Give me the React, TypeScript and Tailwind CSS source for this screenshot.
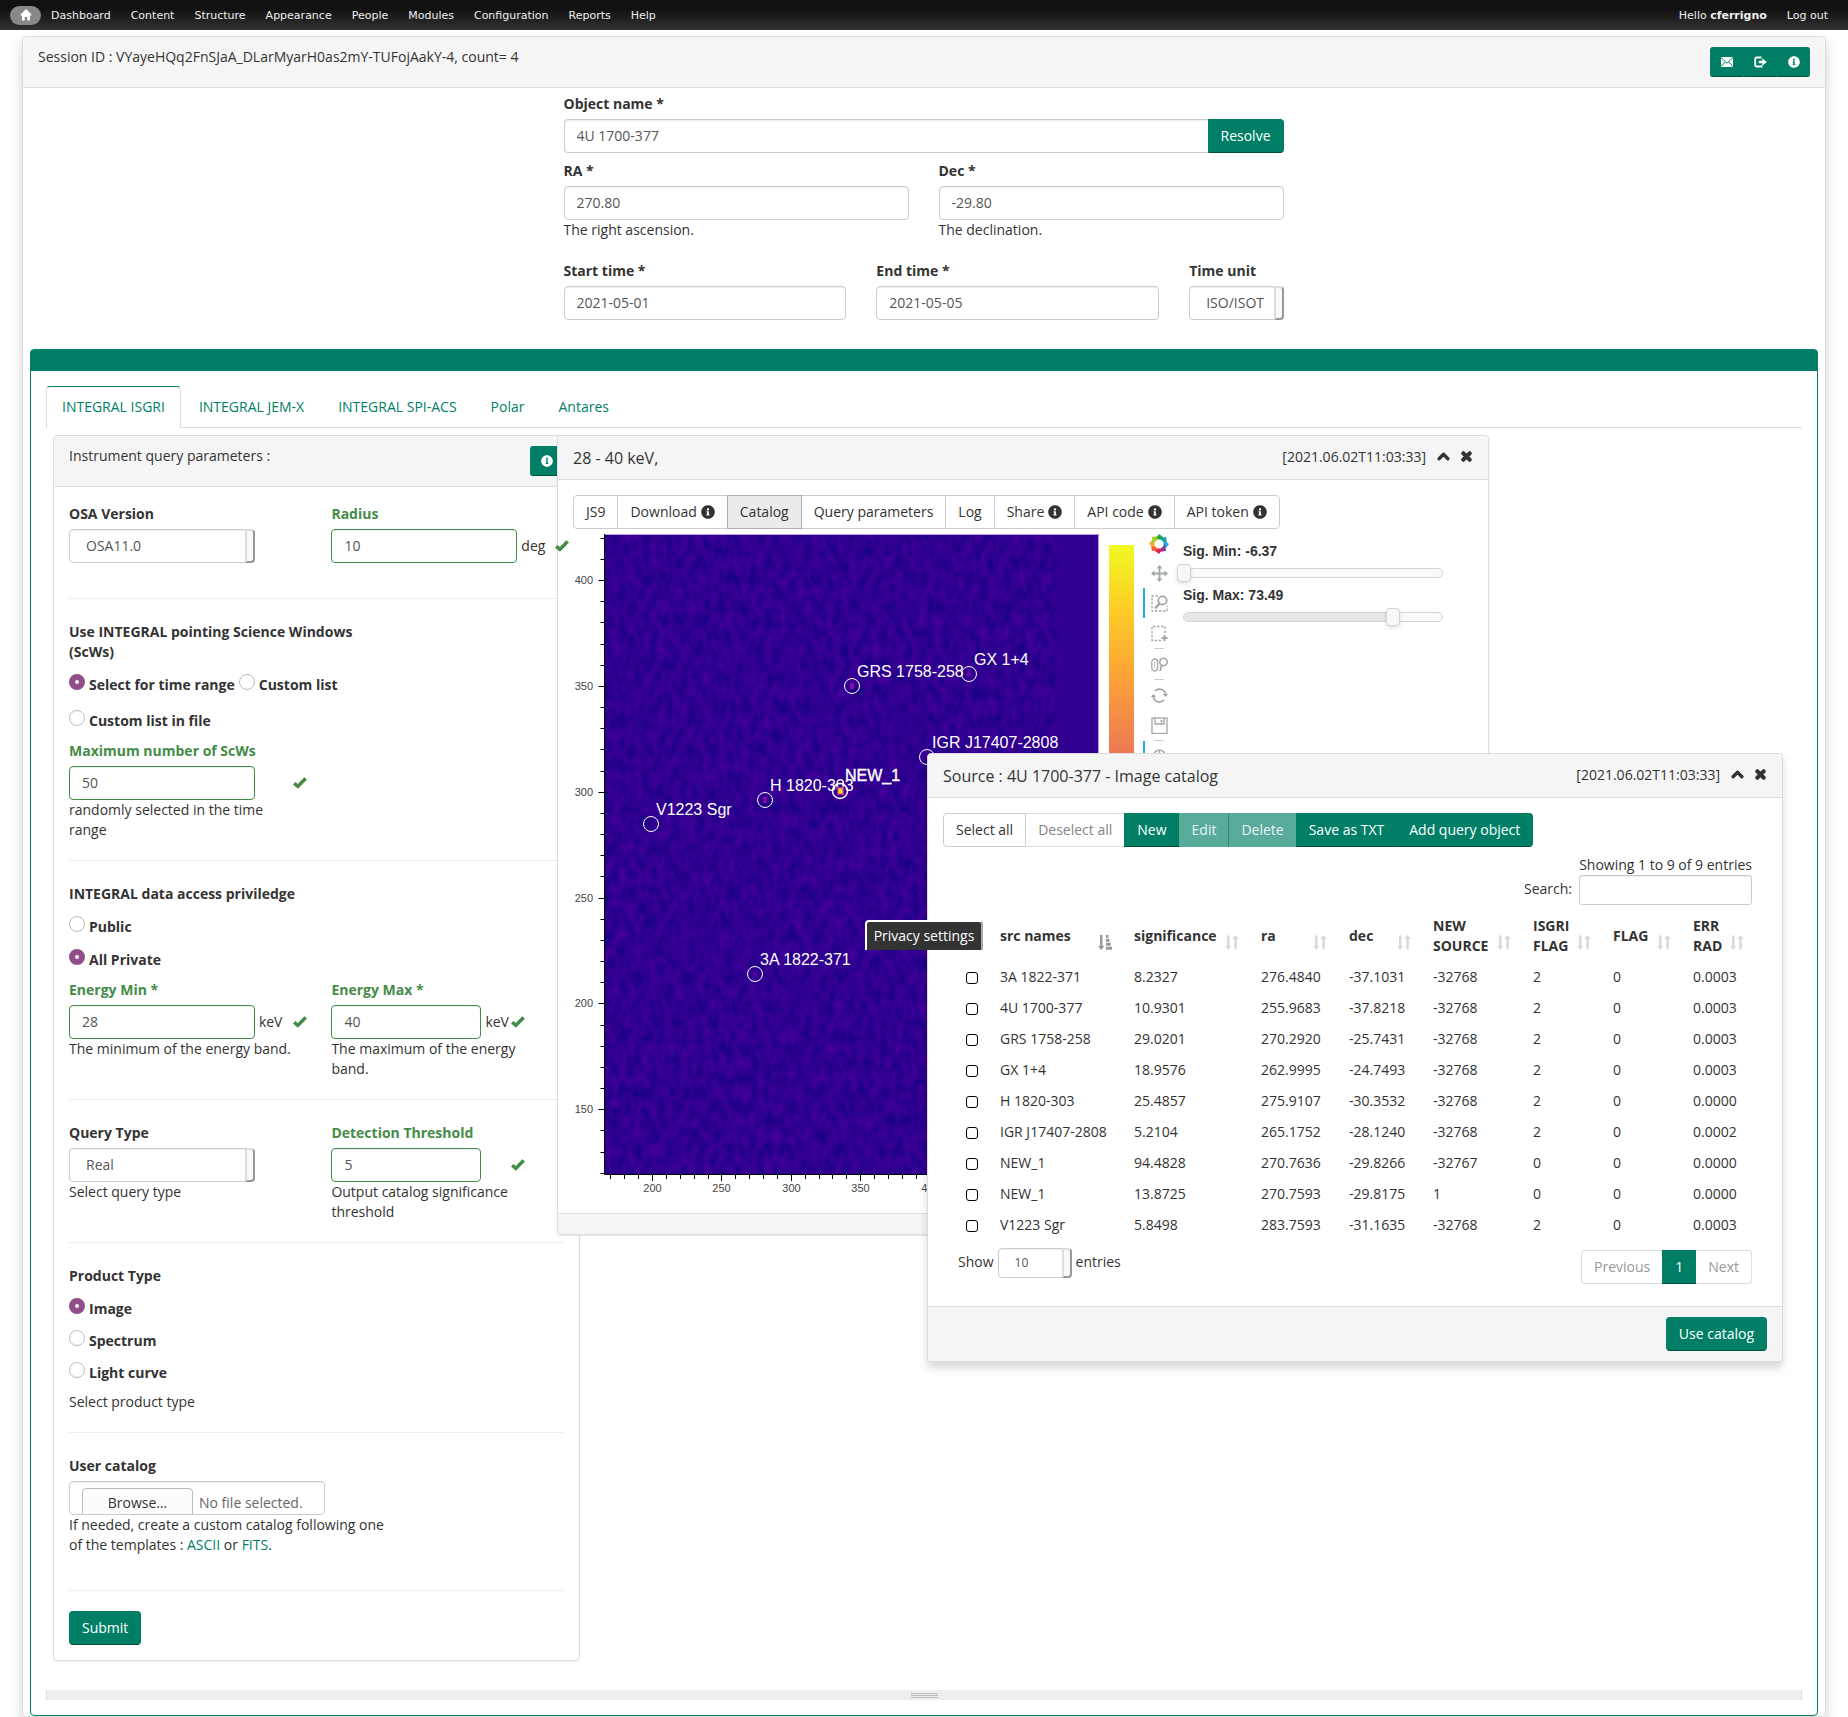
import React from "react";
import { FaChevronUp, FaInfoCircle, FaTimes } from "react-icons/fa";

const inputBase =
  "h-[34px] w-full rounded border bg-white px-3 pb-[2px] text-sm text-[#555] shadow-[inset_0_1px_1px_rgba(0,0,0,0.075)] outline-none";
const greenButton =
  "border border-[#007f66] border-b-[#00523f] bg-[#007f66] text-sm text-white";

function Check({ className }: { className: string }) {
  return (
    <svg aria-hidden viewBox="0 0 14 12" fill="#458b48" className={`absolute top-[36px] z-20 h-3 w-[14px] ${className}`}>
      <path d="M0 7.400 2.300 4.900 4.800 7 11.300 0.200 14 2.600 5 11.800Z" />
    </svg>
  );
}

function Field({
  id,
  label,
  value,
  valid,
  width = "w-full",
  unit,
  help,
  check,
}: {
  id: string;
  label: string;
  value: string;
  valid?: boolean;
  width?: string;
  unit?: string;
  help?: string;
  check?: string;
}) {
  return (
    <div className="relative">
      <label htmlFor={id} className={`block font-bold ${valid ? "text-[#458b48]" : ""}`}>
        {label}
      </label>
      <div className="mt-[5px] flex items-center gap-1">
        <div className={width}>
          <input
            id={id}
            defaultValue={value}
            className={`${inputBase} ${valid ? "border-[#458b48]" : "border-[#ccc]"}`}
          />
        </div>
        {unit && <span>{unit}</span>}
      </div>
      {check && <Check className={check} />}
      {help && <p>{help}</p>}
    </div>
  );
}

function SelectBox({ id, value, className = "h-[34px] text-sm" }: { id: string; value: string; className?: string }) {
  return (
    <div className="relative">
      <select
        id={id}
        className={`w-full appearance-none rounded border border-[#ccc] bg-white pl-4 text-[#555] shadow-[inset_0_1px_1px_rgba(0,0,0,0.075)] outline-none ${className}`}
      >
        <option>{value}</option>
      </select>
      <span
        aria-hidden
        className="pointer-events-none absolute inset-y-0 right-0 w-[10px] rounded-r border-2 border-t-[#ddd] border-r-[#999] border-b-[#999] border-l-[#ddd] bg-[#f8f8f8]"
      />
    </div>
  );
}

function Radio({ name, label, checked }: { name: string; label: string; checked?: boolean }) {
  return (
    <label className="flex h-5 items-start gap-1 font-bold">
      <input
        type="radio"
        name={name}
        defaultChecked={checked}
        className="-mt-px size-4 appearance-none rounded-full border border-[#bbb] bg-white checked:border-[6px] checked:border-[#924d8b]"
      />
      {label}
    </label>
  );
}

function Rule({ className = "" }: { className?: string }) {
  return <hr className={`border-t border-[#eee] ${className}`} />;
}

/* ---------- icons ---------- */

function HomeIcon() {
  return (
    <svg viewBox="0 0 12 12" className="size-3" fill="#fff">
      <path d="M6 0 0.5 5.5V6.5H2V11.500H4.700V8H7.300V11.500H10V6.500H11.500V5.500Z" />
    </svg>
  );
}

function EnvelopeIcon() {
  return (
    <svg viewBox="0 0 12 12" className="size-3">
      <rect y="1" width="12" height="10" fill="#fff" />
      <path d="M0 1.500 6 7.200 12 1.500M0 10.500 4.200 6M12 10.500 7.800 6" fill="none" stroke="#007f66" strokeWidth="1" />
    </svg>
  );
}

function LogoutIcon() {
  return (
    <svg viewBox="0 0 13 12" className="h-3 w-[13px]">
      <path d="M7.500 1.500H2.500A1.300 1.300 0 0 0 1.200 2.800V9.200A1.300 1.300 0 0 0 2.500 10.500H7.500V9.300" fill="none" stroke="#fff" strokeWidth="1.800" />
      <path d="M4.800 4.700H8.300V2.300L12.800 6 8.300 9.700V7.300H4.800Z" fill="#fff" />
    </svg>
  );
}

function SortIcon({ active }: { active?: boolean }) {
  return active ? (
    <svg viewBox="0 0 14 15" className="mt-3 h-[15px] w-[14px] shrink-0" fill="#999">
      <path d="M2 0H4.500V11H6.300L3.200 15 0 11H2Z" />
      <path d="M8 0H10.500V2.800H8ZM8 3.800H11.500V6.700H8ZM8 7.800H12.700V10.700H8ZM8 11.700H14V14.700H8Z" />
    </svg>
  ) : (
    <svg viewBox="0 0 14 15" className="mt-3 h-[15px] w-[14px] shrink-0" fill="#d9d9d9">
      <path d="M2 0.500H4.500V11H6.300L3.200 15 0 11H2ZM9.300 14.500H11.800V4H13.700L10.500 0 7.300 4H9.300Z" />
    </svg>
  );
}

const logoColors = ["#1aa64a", "#12a3a0", "#23a5e0", "#7b3f98", "#ed1459", "#fb5a2b", "#fba72a", "#a5cd27"];

function PlotLogo() {
  return (
    <svg viewBox="0 0 20 20" className="size-5">
      {logoColors.map((c, i) => (
        <path key={c} d="M10 0 14.300 3.200 11.800 5.700 6.300 5.100Z" fill={c} transform={`rotate(${i * 45} 10 10)`} />
      ))}
    </svg>
  );
}

function ToolIcon({ children, label, active }: { children: React.ReactNode; label: string; active?: boolean }) {
  return (
    <button
      aria-label={label}
      className={`flex h-[30px] w-[31px] items-center justify-center border-l-2 ${active ? "border-[#26aae1]" : "border-transparent"}`}
    >
      <svg viewBox="0 0 17 17" className="size-[17px]" fill="none" stroke="#a1a6a9" strokeWidth="1.300">
        {children}
      </svg>
    </button>
  );
}

function ToolDivider() {
  return <span className="h-px w-[10px] bg-[#ccc]" />;
}

/* ---------- significance map ---------- */

const sources = [
  { name: "GRS 1758-258", x: 279, y: 157, glow: "#8b0aa5" },
  { name: "GX 1+4", x: 396, y: 145, glow: "#5c01a6" },
  { name: "IGR J17407-2808", x: 354, y: 228, glow: "" },
  { name: "H 1820-303", x: 192, y: 271, glow: "#7e03a8" },
  { name: "V1223 Sgr", x: 78, y: 295, glow: "" },
  { name: "3A 1822-371", x: 182, y: 445, glow: "#4c02a1" },
];
const plasma = [
  "#f0f921",
  "#fdca26",
  "#fb9f3a",
  "#ed7953",
  "#d8576b",
  "#bd3786",
  "#9c179e",
  "#7201a8",
  "#46039f",
  "#0d0887",
];
const yTicks = Array.from({ length: 31 }, (_, i) => 120 + i * 10);
const xTicks = Array.from({ length: 36 }, (_, i) => 170 + i * 10);
const yPos = (v: number) => Math.round(51 + (400 - v) * 2.117) + 0.5;
const xPos = (v: number) => Math.round(79 + (v - 200) * 1.388) + 0.5;

function SkyMap() {
  return (
    <svg viewBox="0 0 568 684" className="h-[684px] w-[568px] shrink-0" fontFamily="Liberation Sans, Arial, sans-serif">
      <defs>
        <filter id="grain" x="0" y="0" width="1" height="1" colorInterpolationFilters="sRGB">
          <feTurbulence type="fractalNoise" baseFrequency="0.13 0.07" numOctaves="3" seed="7" />
          <feColorMatrix values="0.26 0 0 0 0.055  0 0 0 0 0  0.13 0 0 0 0.5  0 0 0 0 1" />
        </filter>
        <linearGradient id="fade">
          <stop offset="0" stopColor="#310092" stopOpacity="0" />
          <stop offset="0.25" stopColor="#310092" />
          <stop offset="1" stopColor="#310092" />
        </linearGradient>
        <linearGradient id="plasma" x1="0" y1="0" x2="0" y2="1">
          {plasma.map((c, i) => (
            <stop key={c} offset={i / 9} stopColor={c} />
          ))}
        </linearGradient>
      </defs>
      <rect x="32" y="5" width="494" height="640" fill="#310092" filter="url(#grain)" />
      <rect x="478" y="5" width="48" height="640" fill="url(#fade)" />
      <path d="M32 5.500H525.500V645" fill="none" stroke="#b7a5da" />
      <path d="M31.500 5V645.500H526" fill="none" stroke="#000" />
      {yTicks.map((v) => (
        <g key={v}>
          <path d={v % 50 ? `M27.500 ${yPos(v)}H32` : `M25.500 ${yPos(v)}H34`} stroke="#000" />
          {v % 50 === 0 && (
            <text x="20" y={yPos(v) + 3} textAnchor="end" fontSize="11" fill="#444">
              {v}
            </text>
          )}
        </g>
      ))}
      {xTicks.map((v) => (
        <g key={v}>
          <path d={v % 50 ? `M${xPos(v)} 645V650` : `M${xPos(v)} 643V652`} stroke="#000" />
          {v % 50 === 0 && (
            <text x={xPos(v)} y="663" textAnchor="middle" fontSize="11" fill="#444">
              {v}
            </text>
          )}
        </g>
      ))}
      {sources.map((s) => (
        <g key={s.name}>
          {s.glow && <rect x={s.x - 2} y={s.y - 3} width="4" height="6" fill={s.glow} />}
          <circle cx={s.x} cy={s.y} r="7.500" fill="none" stroke="#fff" />
          <text x={s.x + 5} y={s.y - 9} fontSize="16" fill="#fff">
            {s.name}
          </text>
        </g>
      ))}
      <rect x="264" y="258" width="7" height="8" fill="#b12a90" />
      <rect x="265" y="259" width="5" height="6" fill="#f3874a" />
      <rect x="266" y="260" width="3" height="4" fill="#f9e721" />
      <circle cx="267" cy="262" r="7.500" fill="none" stroke="#fff" strokeWidth="1.500" />
      <text x="272" y="252" fontSize="16" fill="#fff" stroke="#fff" strokeWidth="0.400">
        NEW_1
      </text>
      <rect x="536" y="16" width="25" height="618" fill="url(#plasma)" />
    </svg>
  );
}

function Slider({ id, label, value, min, fill }: { id: string; label: string; value: number; min: number; fill: string }) {
  return (
    <div className="h-[44px]">
      <label htmlFor={id} className="block font-bold [font-family:'Liberation_Sans',Arial,sans-serif]">
        {label}: {value}
      </label>
      <div className="relative mt-[7px] h-[10px] w-[260px] rounded-full border border-[#d3d3d3] bg-[#fafafa]">
        <div className={`h-full rounded-l-full bg-[#e6e6e6] ${fill}`} />
        <input
          id={id}
          type="range"
          min={min}
          max={92}
          step="any"
          defaultValue={value}
          className="absolute -top-[5px] -left-[7px] h-[18px] w-[272px] appearance-none bg-transparent [&::-webkit-slider-thumb]:h-[18px] [&::-webkit-slider-thumb]:w-[14px] [&::-webkit-slider-thumb]:appearance-none [&::-webkit-slider-thumb]:rounded [&::-webkit-slider-thumb]:border [&::-webkit-slider-thumb]:border-[#d3d3d3] [&::-webkit-slider-thumb]:bg-[#f8f8f8] [&::-webkit-slider-thumb]:shadow-[0_2px_4px_rgba(0,0,0,0.12)]"
        />
      </div>
    </div>
  );
}

/* ---------- floating windows ---------- */

function WindowHeader({ title }: { title: string }) {
  return (
    <header className="flex h-11 items-center justify-between rounded-t border-b border-[#ddd] bg-[#f5f5f5] px-[15px]">
      <h2 className="text-base">{title}</h2>
      <div className="flex items-center pb-[2px]">
        <span>[2021.06.02T11:03:33]</span>
        <button aria-label="Collapse" className="ml-[11px]">
          <FaChevronUp className="size-[13px]" strokeWidth="50" stroke="currentColor" />
        </button>
        <button aria-label="Close" className="ml-[10px]">
          <FaTimes className="size-[13px]" strokeWidth="70" stroke="currentColor" />
        </button>
      </div>
    </header>
  );
}

const imageActions = [
  { label: "JS9" },
  { label: "Download", info: true },
  { label: "Catalog", active: true },
  { label: "Query parameters" },
  { label: "Log" },
  { label: "Share", info: true },
  { label: "API code", info: true },
  { label: "API token", info: true },
];

function ImageWindow() {
  return (
    <section className="absolute top-0 left-[511px] z-10 w-[932px] rounded border border-[#ddd] bg-white shadow-[0_1px_2px_rgba(0,0,0,0.1)]">
      <WindowHeader title="28 - 40 keV," />
      <div className="px-[15px] pt-[15px]">
        <div className="flex">
          {imageActions.map((a) => (
            <button
              key={a.label}
              className={`-mr-px flex h-[34px] items-center gap-1 border px-3 first:rounded-l last:rounded-r ${
                a.active ? "z-10 border-[#adadad] bg-[#ebebeb]" : "border-[#ccc] bg-white"
              }`}
            >
              {a.label}
              {a.info && <FaInfoCircle className="size-[14px]" />}
            </button>
          ))}
        </div>
        <div className="flex">
          <SkyMap />
          <div className="ml-[2px] flex w-[31px] shrink-0 flex-col items-center pt-[5px]">
            <div className="mb-1">
              <PlotLogo />
            </div>
            <ToolIcon label="Pan">
              <path d="M8.500 2V15M2 8.500H15" strokeWidth="1.800" />
              <path d="M8.500 0 11.500 3.500H5.500ZM8.500 17 11.500 13.500H5.500ZM0 8.500 3.500 5.500V11.500ZM17 8.500 13.500 5.500V11.500Z" fill="#a1a6a9" stroke="none" />
            </ToolIcon>
            <ToolIcon label="Box zoom" active>
              <path d="M7 1H1V16H16V11" strokeDasharray="2.500 1.500" />
              <circle cx="11.500" cy="5.500" r="4.200" strokeWidth="1.800" />
              <path d="M8.500 8.500 4 13.500" strokeWidth="2.500" />
            </ToolIcon>
            <ToolIcon label="Box select">
              <path d="M10 15.500H1V1.500H14V8.500" strokeDasharray="2.500 1.500" />
              <path d="M13.500 10V16M10.500 13H16.500" strokeWidth="2" />
            </ToolIcon>
            <ToolDivider />
            <ToolIcon label="Wheel zoom">
              <rect x="0.800" y="3" width="5.800" height="12" rx="2.900" />
              <path d="M3.700 6V12" strokeDasharray="1.500 1" />
              <circle cx="12.500" cy="6" r="3.700" strokeWidth="1.600" />
              <path d="M10.800 9 9 15" strokeWidth="1.800" />
            </ToolIcon>
            <ToolDivider />
            <ToolIcon label="Reset">
              <path d="M4 4A6.300 6.300 0 0 1 14.800 8M13 13A6.300 6.300 0 0 1 2.200 9" strokeWidth="1.700" />
              <path d="M11.800 7H17.200L14.700 10ZM-0.200 10H5.200L2.300 7Z" fill="#a1a6a9" stroke="none" />
            </ToolIcon>
            <ToolIcon label="Save">
              <rect x="1" y="1" width="15" height="15.500" />
              <path d="M4 1V7H13V1" />
              <path d="M10.500 3V5.500" strokeWidth="1.800" />
            </ToolIcon>
            <ToolDivider />
            <ToolIcon label="Hover" active>
              <circle cx="8.500" cy="8.500" r="6.300" />
              <path d="M8.500 2V15M2 8.500H15" />
            </ToolIcon>
          </div>
          <div className="ml-[9px] pt-[12px]">
            <Slider id="sig-min" label="Sig. Min" value={-6.37} min={-6.37} fill="w-0" />
            <Slider id="sig-max" label="Sig. Max" value={73.49} min={-6.37} fill="w-[81%]" />
          </div>
        </div>
      </div>
      <footer className="h-[21px] rounded-b border-t border-[#ddd] bg-[#f5f5f5]" />
    </section>
  );
}

const columns = [
  { label: "src names", width: "w-[134px]" },
  { label: "significance", width: "w-[127px]" },
  { label: "ra", width: "w-[88px]" },
  { label: "dec", width: "w-[84px]" },
  { label: "NEW SOURCE", width: "w-[100px]" },
  { label: "ISGRI FLAG", width: "w-[80px]" },
  { label: "FLAG", width: "w-[80px]" },
  { label: "ERR RAD", width: "w-[67px]" },
];

const rows = [
  ["3A 1822-371", "8.2327", "276.4840", "-37.1031", "-32768", "2", "0", "0.0003"],
  ["4U 1700-377", "10.9301", "255.9683", "-37.8218", "-32768", "2", "0", "0.0003"],
  ["GRS 1758-258", "29.0201", "270.2920", "-25.7431", "-32768", "2", "0", "0.0003"],
  ["GX 1+4", "18.9576", "262.9995", "-24.7493", "-32768", "2", "0", "0.0003"],
  ["H 1820-303", "25.4857", "275.9107", "-30.3532", "-32768", "2", "0", "0.0000"],
  ["IGR J17407-2808", "5.2104", "265.1752", "-28.1240", "-32768", "2", "0", "0.0002"],
  ["NEW_1", "94.4828", "270.7636", "-29.8266", "-32767", "0", "0", "0.0000"],
  ["NEW_1", "13.8725", "270.7593", "-29.8175", "1", "0", "0", "0.0000"],
  ["V1223 Sgr", "5.8498", "283.7593", "-31.1635", "-32768", "2", "0", "0.0003"],
];

function CatalogWindow() {
  return (
    <section className="absolute top-[318px] left-[881px] z-30 w-[856px] rounded border border-[#ddd] bg-white shadow-[0_6px_8px_rgba(0,0,0,0.15)]">
      <WindowHeader title="Source : 4U 1700-377 - Image catalog" />
      <div className="px-[15px] pt-[15px]">
        <div className="flex">
          <button className="h-[34px] rounded-l border border-[#ccc] px-3">Select all</button>
          <button disabled className="h-[34px] border-y border-[#ddd] px-3 text-[#858585]">
            Deselect all
          </button>
          <button className={`h-[34px] px-3 ${greenButton}`}>New</button>
          <button disabled className="-ml-px h-[34px] border border-[#58ab99] border-r-[#2c8d76] bg-[#58ab99] px-3 text-[#eaf5f2]">
            Edit
          </button>
          <button disabled className="h-[34px] border border-l-0 border-[#58ab99] bg-[#58ab99] px-3 text-[#eaf5f2]">
            Delete
          </button>
          <button className={`-ml-px h-[34px] px-3 ${greenButton}`}>Save as TXT</button>
          <button className={`-ml-px h-[34px] rounded-r px-3 ${greenButton}`}>Add query object</button>
        </div>
        <div className="px-[15px] pt-2">
          <p className="text-right">Showing 1 to 9 of 9 entries</p>
          <div className="flex justify-end gap-[7px]">
            <label htmlFor="search" className="pt-1">
              Search:
            </label>
            <input
              id="search"
              className="h-[30px] w-[173px] rounded-[3px] border border-[#ccc] px-2 shadow-[inset_0_1px_1px_rgba(0,0,0,0.075)]"
            />
          </div>
          <table className="mt-[6px] w-full table-fixed text-left">
            <thead>
              <tr className="h-[50px]">
                <th className="w-[34px]">
                  <span className="sr-only">Selected</span>
                </th>
                {columns.map((c, i) => (
                  <th key={c.label} scope="col" className={`pl-2 ${i === 7 ? "pr-2" : "pr-[14px]"} ${c.width}`}>
                    <div className="flex items-center justify-between">
                      {c.label}
                      <SortIcon active={i === 0} />
                    </div>
                  </th>
                ))}
              </tr>
            </thead>
            <tbody>
              {rows.map((r, i) => (
                <tr key={i} className="h-[31px]">
                  <td className="pl-2">
                    <input
                      type="checkbox"
                      aria-label={`Select ${r[0]}`}
                      className="mt-[2px] block size-3 appearance-none rounded-[3px] border border-black bg-white"
                    />
                  </td>
                  {r.map((cell, j) => (
                    <td key={j} className="pl-2 whitespace-nowrap">
                      {cell}
                    </td>
                  ))}
                </tr>
              ))}
            </tbody>
          </table>
          <div className="flex items-start justify-between pt-[10px] pb-[22px]">
            <div className="flex h-[23px] items-center gap-1">
              <label htmlFor="page-size">Show</label>
              <div className="w-[74px] pt-[3px]">
                <SelectBox id="page-size" value="10" className="h-[30px] text-xs" />
              </div>
              <span>entries</span>
            </div>
            <div className="flex">
              <button disabled className="h-[34px] rounded-l border border-r-0 border-[#ddd] px-3 text-[#999]">
                Previous
              </button>
              <button className={`h-[34px] px-3 ${greenButton}`}>1</button>
              <button disabled className="h-[34px] rounded-r border border-l-0 border-[#ddd] px-3 text-[#999]">
                Next
              </button>
            </div>
          </div>
        </div>
      </div>
      <footer className="flex justify-end rounded-b border-t border-[#ddd] bg-[#f5f5f5] px-[15px] py-[10px]">
        <button className={`h-[34px] rounded px-3 ${greenButton}`}>Use catalog</button>
      </footer>
    </section>
  );
}

/* ---------- query form ---------- */

function QueryPanel() {
  return (
    <form className="ml-[7px] w-[30%] rounded border border-[#ddd] bg-white shadow-[0_1px_1px_rgba(0,0,0,0.05)]">
      <div className="flex items-start justify-between rounded-t border-b border-[#ddd] bg-[#f5f5f5] px-[15px] py-[10px]">
        <span>Instrument query parameters :</span>
        <button type="button" aria-label="Information" className={`flex h-[30px] w-[34px] items-center justify-center rounded-[3px] ${greenButton}`}>
          <FaInfoCircle className="size-3" />
        </button>
      </div>
      <div className="px-[15px] pt-[17px] pb-[15px]">
        <div className="grid grid-cols-2 gap-x-[30px]">
          <div>
            <label htmlFor="osa" className="mb-[5px] block font-bold">
              OSA Version
            </label>
            <div className="w-4/5">
              <SelectBox id="osa" value="OSA11.0" />
            </div>
          </div>
          <Field id="radius" label="Radius" value="10" valid width="w-4/5" unit="deg" check="left-[224px]" />
        </div>
        <Rule className="mt-[35px]" />

        <fieldset className="mt-[23px]">
          <legend className="w-[300px] font-bold">Use INTEGRAL pointing Science Windows (ScWs)</legend>
          <div className="mt-[13px] flex flex-wrap gap-x-1 gap-y-4">
            <Radio name="scws" label="Select for time range" checked />
            <Radio name="scws" label="Custom list" />
            <div className="w-full">
              <Radio name="scws" label="Custom list in file" />
            </div>
          </div>
        </fieldset>
        <div className="mt-[10px] w-[232px]">
          <Field id="max-scws" label="Maximum number of ScWs" value="50" valid width="w-4/5" check="left-[224px]" />
          <p className="w-[210px]">randomly selected in the time range</p>
        </div>
        <Rule className="mt-5" />

        <fieldset className="mt-[23px]">
          <legend className="font-bold">INTEGRAL data access priviledge</legend>
          <div className="mt-[13px] flex flex-col gap-[13px]">
            <Radio name="access" label="Public" />
            <Radio name="access" label="All Private" checked />
          </div>
        </fieldset>
        <div className="mt-[10px] grid grid-cols-2 gap-x-[30px]">
          <Field id="e-min" label="Energy Min *" value="28" valid width="w-4/5" unit="keV" check="left-[224px]" help="The minimum of the energy band." />
          <div className="w-[205px]">
            <Field id="e-max" label="Energy Max *" value="40" valid width="w-[150px]" unit="keV" check="left-[180px]" help="The maximum of the energy band." />
          </div>
        </div>
        <Rule className="mt-5" />

        <div className="mt-[23px] grid grid-cols-2 gap-x-[30px]">
          <div>
            <label htmlFor="query-type" className="mb-[5px] block font-bold">
              Query Type
            </label>
            <div className="w-4/5">
              <SelectBox id="query-type" value="Real" />
            </div>
            <p>Select query type</p>
          </div>
          <div className="w-[205px]">
            <Field id="threshold" label="Detection Threshold" value="5" valid width="w-[150px]" check="left-[180px]" help="Output catalog significance threshold" />
          </div>
        </div>
        <Rule className="mt-5" />

        <fieldset className="mt-[23px]">
          <legend className="font-bold">Product Type</legend>
          <div className="mt-[13px] flex flex-col gap-3">
            <Radio name="product" label="Image" checked />
            <Radio name="product" label="Spectrum" />
            <Radio name="product" label="Light curve" />
          </div>
          <p className="mt-[9px]">Select product type</p>
        </fieldset>
        <Rule className="mt-5" />

        <div className="mt-[23px]">
          <label htmlFor="catalog-file" className="block font-bold">
            User catalog
          </label>
          <label className="relative mt-[5px] flex h-[34px] w-[256px] items-start gap-[6px] overflow-hidden rounded border border-[#ccc] px-3 pt-[6px] shadow-[inset_0_1px_1px_rgba(0,0,0,0.075)]">
            <input id="catalog-file" type="file" className="sr-only" />
            <span className="h-[34px] w-[111px] shrink-0 rounded border border-[#bbb] bg-[#fcfcfc] pt-1 text-center">Browse…</span>
            <span className="pt-[5px] whitespace-nowrap text-[#666]">No file selected.</span>
          </label>
          <p className="w-[328px]">
            If needed, create a custom catalog following one of the templates :{" "}
            <a href="#ascii" className="text-[#007f66]">
              ASCII
            </a>{" "}
            or{" "}
            <a href="#fits" className="text-[#007f66]">
              FITS
            </a>
            .
          </p>
        </div>
        <Rule className="mt-[35px]" />
        <button type="button" className={`mt-5 block h-[34px] rounded px-3 ${greenButton}`}>
          Submit
        </button>
      </div>
    </form>
  );
}

const menu = ["Dashboard", "Content", "Structure", "Appearance", "People", "Modules", "Configuration", "Reports", "Help"];
const tabs = ["INTEGRAL ISGRI", "INTEGRAL JEM-X", "INTEGRAL SPI-ACS", "Polar", "Antares"];

export default function App() {
  return (
    <div className="bg-white text-sm leading-5 text-[#333] [font-family:'Open_Sans','Noto_Sans',sans-serif]">
      <nav className="flex h-[30px] items-center justify-between bg-gradient-to-b from-[#111] from-30% to-[#333] px-[10px] text-[11px] text-[#eee] [font-family:'DejaVu_Sans',Verdana,sans-serif]">
        <div className="flex items-center">
          <a href="#home" aria-label="Home" className="flex h-[19px] w-[31px] items-center justify-center rounded-[10px] bg-[#888]">
            <HomeIcon />
          </a>
          {menu.map((m) => (
            <a key={m} href={`#${m}`} className="px-[10px] pt-px">
              {m}
            </a>
          ))}
        </div>
        <div className="flex">
          <a href="#user" className="px-[10px] pt-px">
            Hello <b>cferrigno</b>
          </a>
          <a href="#logout" className="px-[10px] pt-px">
            Log out
          </a>
        </div>
      </nav>

      <main className="mx-[22px] mt-[6px] rounded border border-[#ddd] shadow-[0_6px_12px_rgba(0,0,0,0.175)]">
        <header className="flex items-start justify-between rounded-t border-b border-[#ddd] bg-[#f5f5f5] px-[15px] py-[10px]">
          <span>Session ID : VYayeHQq2FnSJaA_DLarMyarH0as2mY-TUFojAakY-4, count= 4</span>
          <div className="flex">
            <button aria-label="Contact" className={`flex h-[30px] w-[34px] items-center justify-center rounded-l-[3px] ${greenButton}`}>
              <EnvelopeIcon />
            </button>
            <button aria-label="Leave session" className={`flex h-[30px] w-[33px] items-center justify-center ${greenButton}`}>
              <LogoutIcon />
            </button>
            <button aria-label="About" className={`flex h-[30px] w-[33px] items-center justify-center rounded-r-[3px] ${greenButton}`}>
              <FaInfoCircle className="size-3" />
            </button>
          </div>
        </header>

        <div className="px-[7px]">
          <div className="mx-auto w-5/12 min-w-[600px] pt-[6px] pr-[13px] pl-3">
            <label htmlFor="object" className="block font-bold">
              Object name *
            </label>
            <div className="mt-[5px] flex">
              <input
                id="object"
                defaultValue="4U 1700-377"
                className="h-[34px] min-w-0 flex-1 rounded-l border border-r-0 border-[#ccc] px-3 pb-[2px] text-[#555] shadow-[inset_0_1px_1px_rgba(0,0,0,0.075)]"
              />
              <button className={`h-[34px] rounded-r px-3 ${greenButton}`}>Resolve</button>
            </div>
            <div className="mt-2 grid grid-cols-2 gap-[30px]">
              <Field id="ra" label="RA *" value="270.80" help="The right ascension." />
              <Field id="dec" label="Dec *" value="-29.80" help="The declination." />
            </div>
            <div className="mt-[21px] grid grid-cols-[3fr_3fr_1fr] gap-[30px]">
              <Field id="start" label="Start time *" value="2021-05-01" />
              <Field id="end" label="End time *" value="2021-05-05" />
              <div>
                <label htmlFor="unit" className="mb-[5px] block font-bold">
                  Time unit
                </label>
                <SelectBox id="unit" value="ISO/ISOT" />
              </div>
            </div>
          </div>

          <div className="mt-[29px] rounded border border-[#007f66]">
            <div className="h-[21px] bg-[#007f66]" />
            <div className="p-[15px]">
              <div role="tablist" className="flex border-b border-[#ddd]">
                {tabs.map((t, i) => (
                  <button
                    key={t}
                    role="tab"
                    aria-selected={i === 0}
                    className={`mr-[2px] rounded-t border border-b-0 px-[15px] text-[#007f66] ${
                      i === 0 ? "-mb-px h-[42px] border-[#ddd] border-t-[#007f66] bg-white pb-[2px]" : "h-[41px] border-transparent"
                    }`}
                  >
                    {t}
                  </button>
                ))}
              </div>
              <div className="relative mt-[7px]">
                <QueryPanel />
                <ImageWindow />
                <CatalogWindow />
                <div className="absolute top-[485px] left-[819px] z-40 h-[30px] w-[118px] rounded-t border-2 border-b-0 border-white border-r-[#aaa] bg-[#333] pt-1 text-center text-white">
                  Privacy settings
                </div>
              </div>
              <div className="mt-[29px] flex h-[10px] flex-col items-center justify-center gap-px border-x border-[#ddd] bg-[#eee]">
                <span className="h-px w-[27px] bg-[#bbb]" />
                <span className="h-px w-[27px] bg-[#bbb]" />
                <span className="h-px w-[27px] bg-[#bbb]" />
              </div>
            </div>
          </div>
        </div>
      </main>
    </div>
  );
}
